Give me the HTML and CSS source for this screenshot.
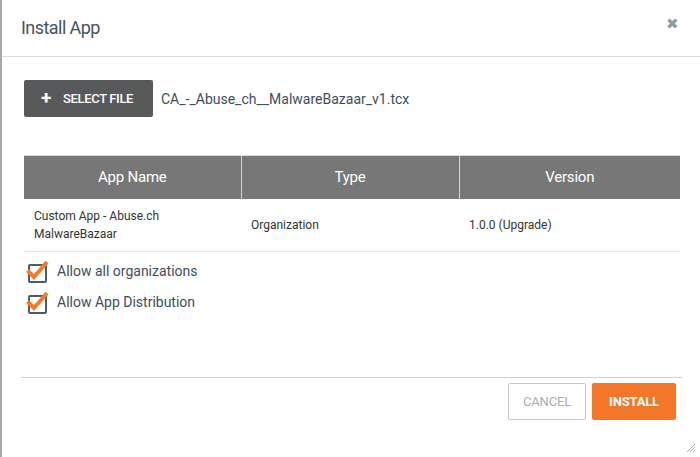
FILE: index.html
```html
<!DOCTYPE html>
<html>
<head>
<meta charset="utf-8">
<link rel="stylesheet" href="styles.css">
</head>
<body>
<div class="dialog">
  <div class="header">
    <h1 class="title">Install App</h1>
    <span class="close">&#10006;</span>
  </div>
  <div class="body">
    <div class="file-row">
      <button class="btn-select"><span class="plus">+</span>SELECT FILE</button>
      <span class="filename">CA_-_Abuse_ch__MalwareBazaar_v1.tcx</span>
    </div>
    <table class="apps">
      <colgroup><col class="c1"><col class="c2"><col class="c3"></colgroup>
      <thead>
        <tr><th>App Name</th><th>Type</th><th>Version</th></tr>
      </thead>
      <tbody>
        <tr><td>Custom App - Abuse.ch<br>MalwareBazaar</td><td>Organization</td><td>1.0.0 (Upgrade)</td></tr>
      </tbody>
    </table>
    <div class="checks">
      <label class="check">
        <svg class="cb" width="26" height="24" viewBox="0 0 26 24">
          <rect x="4" y="6" width="17" height="17" rx="1" fill="none" stroke="#4c5d69" stroke-width="2"/>
          <path d="M2.5 11.5 L9 18 L22 3" fill="none" stroke="#f47a2c" stroke-width="4" stroke-linejoin="miter" stroke-linecap="butt"/>
        </svg>
        <span>Allow all organizations</span>
      </label>
      <label class="check">
        <svg class="cb" width="26" height="24" viewBox="0 0 26 24">
          <rect x="4" y="6" width="17" height="17" rx="1" fill="none" stroke="#4c5d69" stroke-width="2"/>
          <path d="M2.5 11.5 L9 18 L22 3" fill="none" stroke="#f47a2c" stroke-width="4" stroke-linejoin="miter" stroke-linecap="butt"/>
        </svg>
        <span>Allow App Distribution</span>
      </label>
    </div>
  </div>
  <div class="footer">
    <button class="btn-cancel">CANCEL</button>
    <button class="btn-install">INSTALL</button>
  </div>
  <svg class="grip" width="10" height="10" viewBox="0 0 10 10">
    <path d="M9 1 L1 9 M9 4 L4 9 M9 7 L7 9" stroke="#a9b3ba" stroke-width="1"/>
  </svg>
</div>
</body>
</html>
```

FILE: styles.css
```css
* { box-sizing: border-box; }
html, body { margin: 0; padding: 0; background: #fff; }
body { font-family: Roboto, "Liberation Sans", sans-serif; }
.dialog {
  position: relative;
  width: 700px;
  height: 457px;
  border-left: 2px solid #a8a8a8;
  display: flex;
  flex-direction: column;
  background: #fff;
}
.header {
  height: 57px;
  border-bottom: 1px solid #dcdcdc;
  display: flex;
  align-items: center;
  justify-content: space-between;
  padding: 0 21px 0 19px;
}
.title {
  margin: 0;
  font-size: 18px;
  font-weight: 400;
  color: #46535d;
  padding-bottom: 1px;
  letter-spacing: -0.55px;
}
.close {
  color: #8d9ba5;
  font-size: 15px;
  margin-bottom: 9px;
}
.body {
  flex: 1;
  padding: 23px 18px 0 22px;
}
.file-row {
  display: flex;
  align-items: center;
  height: 37px;
}
.btn-select {
  height: 37px;
  width: 129px;
  background: #58595b;
  color: #fff;
  border: none;
  border-radius: 2px;
  font-family: Roboto, "Liberation Sans", sans-serif;
  font-size: 13px;
  font-weight: 500;
  display: flex;
  align-items: center;
  padding: 0 0 0 17px;
  letter-spacing: -0.35px;
}
.plus {
  font-size: 19px;
  font-weight: 700;
  margin-right: 12px;
  line-height: 1;
  margin-top: -2px;
}
.filename {
  margin-left: 8px;
  font-size: 14px;
  color: #3d4e5a;
}
.apps {
  margin-top: 38px;
  width: 656px;
  border-collapse: collapse;
  table-layout: fixed;
}
.c1 { width: 217px; }
.c2 { width: 218px; }
.c3 { width: 221px; }
.apps th {
  background: #777777;
  color: #fff;
  font-weight: 400;
  font-size: 15px;
  height: 43px;
  border-left: 1px solid #d5d5d5;
  border-top: 1px solid #d5d5d5;
  letter-spacing: -0.2px;
}
.apps th:first-child { border-left: none; }
.apps td {
  font-size: 12px;
  color: #333;
  height: 53px;
  padding: 0 10px;
  line-height: 18px;
  border-bottom: 1px solid #dde2e5;
}
.checks {
  padding-top: 7px;
  display: flex;
  flex-direction: column;
  gap: 7px;
}
.check {
  display: flex;
  align-items: center;
  font-size: 14px;
  color: #3d4e5a;
  height: 24px;
}
.cb { margin-left: 1px; margin-right: 6px; }
.footer {
  margin: 0 18px 0 19px;
  border-top: 1px solid #cfcfcf;
  height: 80px;
  display: flex;
  justify-content: flex-end;
  align-items: flex-start;
  gap: 6px;
  padding-top: 5px;
  padding-right: 6px;
}
.btn-cancel, .btn-install {
  height: 37px;
  font-family: Roboto, "Liberation Sans", sans-serif;
  font-size: 13px;
  border-radius: 2px;
  letter-spacing: -0.2px;
}
.btn-cancel {
  width: 78px;
  background: #fff;
  color: #a7adb2;
  border: 1px solid #c4c8cb;
}
.btn-install {
  width: 84px;
  background: #f47629;
  color: #fff;
  border: none;
  font-weight: 700;
}
.grip {
  position: absolute;
  right: 4px;
  bottom: 4px;
}
```
